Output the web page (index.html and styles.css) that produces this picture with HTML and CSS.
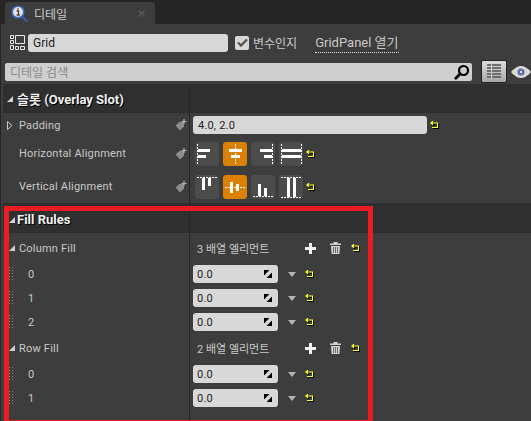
FILE: index.html
```html
<!DOCTYPE html>
<html lang="ko">
<head>
  <meta charset="UTF-8" />
  <meta name="viewport" content="width=device-width, initial-scale=1.0"/>
  <title>디테일</title>
  <link rel="stylesheet" href="styles.css">
</head>
<body>
  <svg class="sprite" width="0" height="0">
    <symbol id="reset" viewBox="0 0 9 8">
      <path d="M3 .2 .8 2 3 3.800M1 2H7.500V6.500H2" fill="none" stroke="#ffff3c" stroke-width="1.100"/>
    </symbol>
    <symbol id="tag" viewBox="0 0 12 12">
      <path d="M.5 6.500 4.500 3h4.500v4.500L5 11.500Z" fill="#8e8e8e"/>
      <path d="M9 0v5M6.500 2.500h5" stroke="#b4b4b4" stroke-width="1.200"/>
    </symbol>
    <symbol id="spin" viewBox="0 0 8 8">
      <path d="M0 0h5.500L0 5.500ZM8 2.500V8H2.500Z" fill="#000"/>
    </symbol>
    <symbol id="plus" viewBox="0 0 11 11">
      <path d="M4 0h3v4h4v3H7v4H4V7H0V4h4Z" fill="#f2f2f2"/>
    </symbol>
    <symbol id="trash" viewBox="0 0 11 12">
      <path d="M0 1.500h3.500V0h4v1.500H11V3H0ZM1 4h9l-.6 8H1.600Z" fill="#d2d2d2"/>
      <path d="M3.500 5v6M5.500 5v6M7.500 5v6" stroke="#3d3d3d" stroke-width=".7"/>
    </symbol>
  </svg>

  <div class="tabbar">
    <div class="tab">
      <svg class="tab-icon" width="17" height="17" viewBox="0 0 17 17">
        <path d="M10.500 11 15.500 15.800" stroke="#2f5fa8" stroke-width="2.400" stroke-linecap="round"/>
        <circle cx="7" cy="7" r="5.800" fill="#dfe6f2" stroke="#3f6fc0" stroke-width="1.600"/>
        <path d="M7 3.200v1.500M5.600 6H7.500V10M5.600 10H8.800" stroke="#6b2f1f" stroke-width="1.300" fill="none"/>
      </svg>
      <span class="tab-title">디테일</span>
      <svg class="tab-close" width="7" height="7" viewBox="0 0 7 7">
        <path d="M.5 .5l6 6M6.500 .5l-6 6" stroke="#5c5c5c" stroke-width="1.200"/>
      </svg>
    </div>
  </div>

  <div class="panel">
    <div class="name-row">
      <svg class="widget-icon" width="15" height="15" viewBox="0 0 15 15">
        <path d="M.5 .5h3v3h-3ZM.5 5.500h3v3h-3ZM.5 10.500h3v4h-3ZM5.500 .5h9v8h-9ZM5.500 11.500h3v3h-3ZM10.500 11.500h4v3h-4Z" fill="none" stroke="#e8e8e8"/>
      </svg>
      <div class="field name-field">Grid</div>
      <span class="checkbox">
        <svg width="11" height="9" viewBox="0 0 11 9"><path d="M1 4.500 4 7.500 10 1.500" fill="none" stroke="#555" stroke-width="2.400"/></svg>
      </span>
      <span class="check-label">변수인지</span>
      <span class="open-link">GridPanel 열기</span>
    </div>

    <div class="search-row">
      <div class="search">
        <span>디테일 검색</span>
        <svg width="16" height="16" viewBox="0 0 16 16">
          <circle cx="9.500" cy="6.500" r="4.500" fill="none" stroke="#000" stroke-width="2.200"/>
          <path d="M6 10 1.800 14.200" stroke="#000" stroke-width="2.800" stroke-linecap="round"/>
        </svg>
      </div>
      <div class="view-btn">
        <svg width="14" height="15" viewBox="0 0 14 15">
          <path d="M0 1h14M0 4h14M0 7h14M0 10h14M0 13h14" stroke="#6e6e6e" stroke-width="2"/>
          <path d="M4.500 0v15" stroke="#d0d0d0"/>
        </svg>
      </div>
      <svg class="eye" width="20" height="12" viewBox="0 0 20 12">
        <path d="M0 6C4 1 8 0 10 0s6 1 10 6c-4 5-8 6-10 6S4 11 0 6Z" fill="#d8d8d8"/>
        <circle cx="10" cy="6" r="3.500" fill="#5472a8"/>
        <circle cx="10" cy="6" r="1.200" fill="#dfe6f2"/>
      </svg>
    </div>

    <div class="section-head section-slot">
      <span class="arrow-open"></span>
      <span class="section-title">슬롯 (Overlay Slot)</span>
    </div>

    <div class="row row-padding">
      <div class="name">
        <svg class="arrow-closed" width="6" height="9" viewBox="0 0 6 9"><path d="M.5 .5 5 4.500 .5 8.500Z" fill="none" stroke="#c8c8c8"/></svg>
        <span class="label">Padding</span>
        <svg class="tag"><use href="#tag"/></svg>
      </div>
      <div class="value">
        <div class="field padding-field">4.0, 2.0</div>
        <svg class="reset"><use href="#reset"/></svg>
      </div>
    </div>

    <div class="row row-align">
      <div class="name">
        <span class="label label-indent">Horizontal Alignment</span>
        <svg class="tag"><use href="#tag"/></svg>
      </div>
      <div class="value">
        <div class="align-group">
          <svg class="align-btn" viewBox="0 0 24 24">
            <path class="guide" d="M2.500 2v20"/>
            <path class="bar" d="M3 7h12v3H3ZM3 13h8v3H3Z"/>
          </svg>
          <svg class="align-btn active" viewBox="0 0 24 24">
            <path class="guide" d="M12.500 2v20"/>
            <path class="bar" d="M6 7h13v3H6ZM8 13h9v3H8Z"/>
          </svg>
          <svg class="align-btn" viewBox="0 0 24 24">
            <path class="guide" d="M21.500 2v20"/>
            <path class="bar" d="M9 7h12v3H9ZM13 13h8v3H13Z"/>
          </svg>
          <svg class="align-btn" viewBox="0 0 24 24">
            <path class="guide" d="M2.500 2v20M22.500 2v20"/>
            <path class="bar" d="M3 7h19v3H3ZM3 13h19v3H3Z"/>
          </svg>
        </div>
        <svg class="reset"><use href="#reset"/></svg>
      </div>
    </div>

    <div class="row row-align">
      <div class="name">
        <span class="label label-indent">Vertical Alignment</span>
        <svg class="tag"><use href="#tag"/></svg>
      </div>
      <div class="value">
        <div class="align-group">
          <svg class="align-btn" viewBox="0 0 24 24">
            <path class="guide" d="M2 2.500h20"/>
            <path class="bar" d="M7 3h3v12H7ZM13 3h3v8h-3Z"/>
          </svg>
          <svg class="align-btn active" viewBox="0 0 24 24">
            <path class="guide" d="M2 12.500h20"/>
            <path class="bar" d="M7 7h3v11H7ZM13 9h3v7h-3Z"/>
          </svg>
          <svg class="align-btn" viewBox="0 0 24 24">
            <path class="guide" d="M2 21.500h20"/>
            <path class="bar" d="M7 9h3v12H7ZM13 13h3v8h-3Z"/>
          </svg>
          <svg class="align-btn" viewBox="0 0 24 24">
            <path class="guide" d="M2 2.500h20M2 22.500h20"/>
            <path class="bar" d="M8 3h3v19H8ZM14 3h3v19h-3Z"/>
          </svg>
        </div>
        <svg class="reset"><use href="#reset"/></svg>
      </div>
    </div>

    <div class="section-head section-fill">
      <span class="arrow-open"></span>
      <span class="section-title">Fill Rules</span>
    </div>

    <div class="row row-array">
      <div class="name">
        <span class="arrow-open arrow-sub"></span>
        <span class="label">Column Fill</span>
      </div>
      <div class="value array-value">
        <span class="array-count">3 배열 엘리먼트</span>
        <svg class="plus"><use href="#plus"/></svg>
        <svg class="trash"><use href="#trash"/></svg>
        <svg class="reset"><use href="#reset"/></svg>
      </div>
    </div>
    <div class="row row-item">
      <div class="name"><span class="grip"></span><span class="label index">0</span></div>
      <div class="value"><div class="field num-field">0.0<svg class="spin"><use href="#spin"/></svg></div><span class="drop"></span><svg class="reset"><use href="#reset"/></svg></div>
    </div>
    <div class="row row-item">
      <div class="name"><span class="grip"></span><span class="label index">1</span></div>
      <div class="value"><div class="field num-field">0.0<svg class="spin"><use href="#spin"/></svg></div><span class="drop"></span><svg class="reset"><use href="#reset"/></svg></div>
    </div>
    <div class="row row-item">
      <div class="name"><span class="grip"></span><span class="label index">2</span></div>
      <div class="value"><div class="field num-field">0.0<svg class="spin"><use href="#spin"/></svg></div><span class="drop"></span><svg class="reset"><use href="#reset"/></svg></div>
    </div>

    <div class="row row-array">
      <div class="name">
        <span class="arrow-open arrow-sub"></span>
        <span class="label">Row Fill</span>
      </div>
      <div class="value array-value">
        <span class="array-count">2 배열 엘리먼트</span>
        <svg class="plus"><use href="#plus"/></svg>
        <svg class="trash"><use href="#trash"/></svg>
        <svg class="reset"><use href="#reset"/></svg>
      </div>
    </div>
    <div class="row row-item">
      <div class="name"><span class="grip"></span><span class="label index">0</span></div>
      <div class="value"><div class="field num-field">0.0<svg class="spin"><use href="#spin"/></svg></div><span class="drop"></span><svg class="reset"><use href="#reset"/></svg></div>
    </div>
    <div class="row row-item">
      <div class="name"><span class="grip"></span><span class="label index">1</span></div>
      <div class="value"><div class="field num-field">0.0<svg class="spin"><use href="#spin"/></svg></div><span class="drop"></span><svg class="reset"><use href="#reset"/></svg></div>
    </div>
    <div class="row row-end">
      <div class="name"></div>
    </div>

    <div class="highlight"></div>
  </div>
</body>
</html>
```

FILE: styles.css
```css
:root {
  --panel-color: #3d3d3d;
  --head-color: #2f2f2f;
  --dark-color: #252525;
  --field-color: #d8d8d8;
  --text-color: #c8c8c8;
  --font-stack: Roboto, "Noto Sans CJK KR", sans-serif;
}

* {
  box-sizing: border-box;
}

html,
body {
  height: 100%;
}

body {
  margin: 0;
  overflow: hidden;
  background-color: var(--dark-color);
  color: var(--text-color);
  font-family: var(--font-stack);
  font-size: 11px;
}

.sprite {
  position: absolute;
}

/* tab strip */
.tabbar {
  height: 24px;
  padding: 2px 0 0 5px;
}

.tab {
  display: flex;
  align-items: center;
  width: 150px;
  height: 22px;
  padding: 0 10px 0 6px;
  background-color: var(--panel-color);
  border-radius: 3px 3px 0 0;
}

.tab-title {
  margin-left: 6px;
  font-size: 12px;
}

.tab-close {
  margin-left: auto;
}

/* panel */
.panel {
  position: relative;
  height: 397px;
  background-color: var(--panel-color);
  box-shadow: inset 1px 0 0 var(--dark-color);
}

.name-row {
  display: flex;
  align-items: center;
  height: 36px;
  padding: 1px 0 0 10px;
}

.field {
  display: flex;
  align-items: center;
  height: 18px;
  padding-left: 5px;
  background-color: var(--field-color);
  border-radius: 3px;
  color: #222;
  font-size: 12px;
}

.name-field {
  width: 200px;
  margin-left: 3px;
}

.checkbox {
  display: flex;
  align-items: center;
  justify-content: center;
  width: 14px;
  height: 14px;
  margin-left: 7px;
  background-color: #d8d8d8;
  border-radius: 2px;
}

.check-label {
  margin-left: 4px;
  font-size: 12px;
}

.open-link {
  margin-left: 18px;
  padding-bottom: 1px;
  border-bottom: 1px dotted #e0e0e0;
  font-size: 13px;
}

.search-row {
  display: flex;
  align-items: center;
  height: 23px;
  padding-left: 5px;
}

.search {
  display: flex;
  align-items: center;
  justify-content: space-between;
  width: 474px;
  height: 18px;
  padding: 0 2px 0 5px;
  background-color: #cfcfcf;
  border-radius: 2px;
  color: #8a8a8a;
  font-size: 12px;
}

.view-btn {
  display: flex;
  align-items: center;
  justify-content: center;
  width: 26px;
  height: 23px;
  margin-left: 9px;
  background: linear-gradient(#dcdcdc, #a8a8a8);
  border: 1px solid #222;
  border-radius: 2px;
}

.eye {
  flex: none;
  margin-left: 4px;
}

/* detail rows */
.section-head {
  display: flex;
  align-items: center;
  margin-left: 3px;
  padding-left: 4px;
  background-color: var(--head-color);
  background-image: linear-gradient(#252525, #252525);
  background-position: 186px 0;
  background-size: 1px 100%;
  background-repeat: no-repeat;
}

.section-slot {
  height: 29px;
  margin-top: 1px;
}

.section-fill {
  height: 30px;
  margin-bottom: 1px;
  padding: 3px 0 0 6px;
}

.section-title {
  margin-left: 2px;
  color: #f0f0f0;
  font-size: 13px;
  font-weight: bold;
  text-shadow: 1px 1px 0 #000;
}

.section-slot .section-title {
  margin-left: 4px;
}

.arrow-open {
  width: 0;
  height: 0;
  border-style: solid;
  border-width: 0 0 6px 6px;
  border-color: transparent transparent #d0d0d0 transparent;
}

.arrow-sub {
  margin-left: 6px;
}

.arrow-closed {
  flex: none;
  margin-left: 4px;
}

.row {
  display: grid;
  grid-template-columns: 190px 1fr;
}

.row-padding {
  height: 24px;
}

.row-align {
  height: 33px;
}

.row-array {
  height: 28px;
}

.row-item {
  height: 24px;
}

.row-end {
  height: 11px;
}

.name {
  display: flex;
  align-items: center;
  margin-left: 3px;
  border-right: 1px solid #252525;
}

.label {
  margin-left: 6px;
  letter-spacing: 0.2px;
}

.label-indent {
  margin-left: 16px;
}

.arrow-sub + .label {
  margin-left: 4px;
}

.index {
  margin-left: 15px;
}

.tag {
  flex: none;
  width: 12px;
  height: 12px;
  margin-left: auto;
  margin-right: 2px;
}

.value {
  display: flex;
  align-items: center;
  padding-left: 3px;
}

.reset {
  flex: none;
  width: 9px;
  height: 8px;
  overflow: visible;
  filter: drop-shadow(1px 1px 0 #000);
}

.padding-field {
  width: 234px;
  margin-right: 3px;
  font-size: 11px;
  letter-spacing: 0.2px;
}

.align-group {
  display: flex;
  gap: 4px;
  margin: 0 3px 0 2px;
}

.align-btn {
  width: 24px;
  height: 24px;
  background-color: #4c4c4c;
  border-radius: 3px;
}

.align-btn.active {
  background-color: #db8106;
}

.guide {
  fill: none;
  stroke: #fff;
  stroke-dasharray: 2 1;
}

.bar {
  fill: #fff;
}

.array-value {
  padding-left: 7px;
}

.array-count {
  width: 108px;
}

.plus {
  width: 11px;
  height: 11px;
}

.trash {
  width: 11px;
  height: 12px;
  margin: 0 10px 0 14px;
}

.num-field {
  justify-content: space-between;
  width: 85px;
  padding: 0 6px 0 4px;
  font-size: 11px;
  letter-spacing: 0.2px;
}

.spin {
  width: 8px;
  height: 8px;
}

.drop {
  width: 0;
  height: 0;
  margin: 0 9px 0 10px;
  border-style: solid;
  border-width: 5px 4.5px 0;
  border-color: #b4b4b4 transparent transparent;
}

.grip {
  width: 4px;
  height: 14px;
  margin-left: 6px;
  background-image: radial-gradient(circle at 0.5px 0.5px, #8a8a8a 0.7px, transparent 0.8px);
  background-size: 3px 3px;
}

/* red annotation box drawn over the screenshot */
.highlight {
  position: absolute;
  left: 4px;
  top: 182px;
  width: 369px;
  height: 215px;
  border: 5px solid #ed1c24;
  border-bottom-width: 1px;
  pointer-events: none;
}
```
